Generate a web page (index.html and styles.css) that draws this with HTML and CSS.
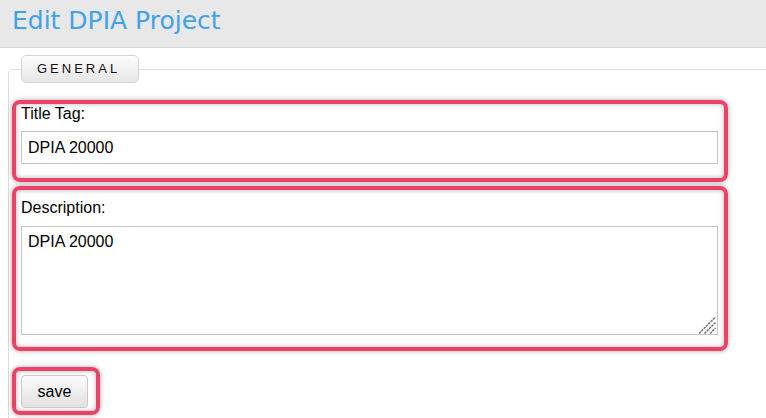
FILE: index.html
```html
<!DOCTYPE html>
<html>
<head>
<meta charset="utf-8">
<link rel="stylesheet" href="styles.css">
</head>
<body>
<header class="page-header">
  <h1 class="page-title">Edit DPIA Project</h1>
</header>
<fieldset class="panel">
  <legend class="panel-legend">GENERAL</legend>
  <div class="group group-title">
    <label class="field-label" for="title">Title Tag:</label>
    <input class="field-input" id="title" type="text" value="DPIA 20000">
  </div>
  <div class="group group-desc">
    <label class="field-label" for="desc">Description:</label>
    <div class="textarea-wrap">
      <textarea class="field-textarea" id="desc">DPIA 20000</textarea>
      <svg class="grip" width="18" height="18" viewBox="0 0 18 18" aria-hidden="true">
        <g stroke="#6f6f6f" stroke-width="1.5" stroke-dasharray="2.5 0.8" fill="none">
          <line x1="1" y1="17.5" x2="17.5" y2="1"/>
          <line x1="6.5" y1="17.5" x2="17.5" y2="6.5"/>
          <line x1="12" y1="17.5" x2="17.5" y2="12"/>
        </g>
      </svg>
    </div>
  </div>
  <div class="group group-save">
    <button class="save-btn" type="button">save</button>
  </div>
</fieldset>
</body>
</html>
```
FILE: styles.css
```css
html, body {
  margin: 0;
  padding: 0;
  background: #fff;
  overflow: hidden;
}
body {
  font-family: "Liberation Sans", Arial, sans-serif;
  font-size: 16px;
  color: #000;
  width: 766px;
  height: 418px;
}
.page-header {
  height: 48px;
  box-sizing: border-box;
  background: #e8e8e8;
  border-bottom: 1px solid #d6d6d6;
  padding: 6px 12px 0;
}
.page-title {
  margin: 0;
  font-family: "DejaVu Sans", Verdana, sans-serif;
  font-weight: normal;
  font-size: 25px;
  line-height: 29px;
  color: #40a2ea;
}
.panel {
  margin: 7px -12px 0 8px;
  padding: 17px 0 20px 3px;
  border: 1px solid #dcdcdc;
  border-radius: 5px;
  min-width: 0;
}
.panel-legend {
  margin-left: 9px;
  padding: 0 14px 0 15px;
  height: 28px;
  box-sizing: border-box;
  line-height: 26px;
  font-size: 13px;
  letter-spacing: 3px;
  color: #111;
  border: 1px solid #d4d4d4;
  border-radius: 5px;
  background: linear-gradient(#fdfdfd, #e6e6e6);
  width: 118px;
}
.group {
  box-sizing: border-box;
  width: 716px;
  border: 4px solid #ec4267;
  border-radius: 8px;
  box-shadow: 0 0 5px rgba(0,0,0,0.35), inset 0 0 5px rgba(0,0,0,0.3);
}
.group-title {
  height: 82px;
  padding: 1px 6px 0 5px;
}
.group-desc {
  margin-top: 4px;
  height: 165px;
  padding: 9px 6px 0 5px;
}
.group-save {
  margin-top: 16px;
  width: 88px;
  height: 48px;
  padding: 4px 0 0 5px;
}
.field-label {
  display: block;
  line-height: 18px;
  margin-bottom: 8px;
}
.group-desc .field-label {
  margin-bottom: 9px;
}
.field-input {
  display: block;
  box-sizing: border-box;
  width: 697px;
  height: 33px;
  margin: 0;
  border: 1px solid #c4c4c4;
  padding: 0 6px;
  font-family: "Liberation Sans", Arial, sans-serif;
  font-size: 16px;
  color: #000;
  background: #fff;
  outline: none;
}
.textarea-wrap {
  position: relative;
  width: 697px;
  height: 109px;
}
.field-textarea {
  display: block;
  box-sizing: border-box;
  width: 697px;
  height: 109px;
  margin: 0;
  border: 1px solid #c4c4c4;
  padding: 6px 6px;
  font-family: "Liberation Sans", Arial, sans-serif;
  font-size: 16px;
  line-height: 18px;
  color: #000;
  background: #fff;
  outline: none;
  resize: none;
}
.grip {
  position: absolute;
  right: 2px;
  bottom: 1px;
}
.save-btn {
  display: block;
  box-sizing: border-box;
  width: 67px;
  height: 33px;
  margin: 0;
  padding: 0;
  border: 1px solid #c8c8c8;
  border-radius: 4px;
  background: linear-gradient(#fbfbfb, #e2e2e2);
  font-family: "Liberation Sans", Arial, sans-serif;
  font-size: 16px;
  color: #000;
}
```
